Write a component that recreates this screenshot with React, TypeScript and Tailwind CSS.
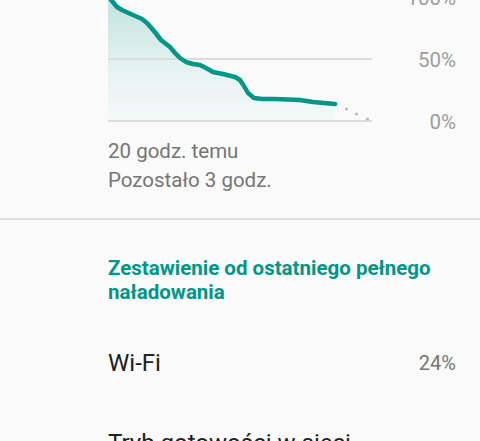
import React from 'react';

const curve: [number, number][] = [
  [108, -4], [112, 1], [117, 7], [122, 10], [133, 15], [142, 19], [147, 23], [154, 31], [161, 40],
  [170, 47], [175, 53], [180, 58], [186, 62], [193, 64], [200, 65], [206, 68], [213, 72],
  [223, 74], [235, 77], [240, 80], [244, 86], [248, 93], [254, 98], [262, 99], [275, 99],
  [300, 100], [313, 102], [335, 104],
];

// svg box starts 15px above the page top and 108px from the left
const OX = 108;
const OY = -15;

function BatteryChart() {
  const pts = curve.map(([x, y]) => `${x - OX},${y - OY}`);
  const line = `M${pts.join(' L')}`;
  const area = `${line} L${335 - OX},${121 - OY} L0,${121 - OY} Z`;
  const grid = [-3, 59, 121];
  return (
    <svg width={264} height={141} className="block shrink-0">
      <defs>
        <linearGradient id="fade" x1="0" y1="0" x2="0" y2="1">
          <stop offset="0" stopColor="#bfe2dc" />
          <stop offset="0.55" stopColor="#e4f2ef" />
          <stop offset="1" stopColor="#f5f9f8" />
        </linearGradient>
      </defs>
      <path d={area} fill="url(#fade)" />
      {grid.map((y) => (
        <line key={y} x1={0} x2={264} y1={y - OY} y2={y - OY} stroke="#dcdcdc" strokeWidth={2} />
      ))}
      <path d={line} fill="none" stroke="#009688" strokeWidth={4.5} strokeLinejoin="round" strokeLinecap="round" />
      {[[346.5, 109], [356.5, 114], [367.5, 119]].map(([x, y]) => (
        <circle key={x} cx={x - OX} cy={y - OY} r={1.6} fill="#a9bcc4" />
      ))}
    </svg>
  );
}

export default function App() {
  return (
    <div className="h-[441px] overflow-hidden bg-[#fafafa] font-['Roboto','Liberation_Sans',sans-serif]">
      <div className="-mt-[15px] flex h-[141px] items-start pl-[108px] pr-[24px]">
        <BatteryChart />
        <div className="flex flex-1 flex-col items-end gap-[38px] pt-[1px] text-[20.5px] leading-[24px] text-[#9e9e9e]">
          <span>100%</span>
          <span>50%</span>
          <span>0%</span>
        </div>
      </div>

      <div className="mt-[11px] pl-[108px] text-[20.5px] leading-[29px] text-[#757575]">
        <p>20 godz. temu</p>
        <p>Pozostało 3 godz.</p>
      </div>

      <div className="mt-[23px] h-[2px] bg-[#e0e0e0]" />

      <div className="pl-[108px] pr-[24px] pt-[37px]">
        <h2 className="text-[20.5px] font-bold leading-[23.5px] text-[#009688]">
          Zestawienie od ostatniego pełnego naładowania
        </h2>
      </div>

      <div className="flex items-center justify-between pl-[108px] pr-[24px] pt-[44px]">
        <span className="text-[24px] leading-[30px] text-[#212121]">Wi-Fi</span>
        <span className="text-[20px] leading-[30px] text-[#757575]">24%</span>
      </div>

      <div className="pl-[108px] pt-[50px]">
        <span className="text-[24px] leading-[30px] text-[#212121]">Tryb gotowości w sieci</span>
      </div>
    </div>
  );
}
